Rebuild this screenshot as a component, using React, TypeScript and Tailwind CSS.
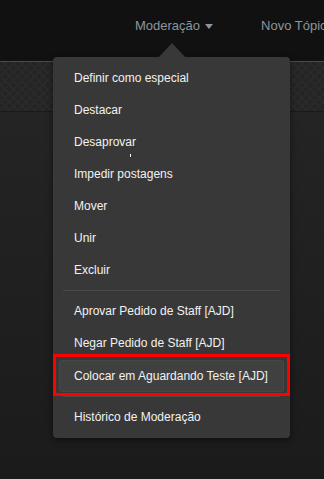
import { Fragment } from "react";

// itens do menu de moderação, agrupados por separador
const GROUPS: string[][] = [
  ["Definir como especial", "Destacar", "Desaprovar", "Impedir postagens", "Mover", "Unir", "Excluir"],
  ["Aprovar Pedido de Staff [AJD]", "Negar Pedido de Staff [AJD]", "Colocar em Aguardando Teste [AJD]"],
  ["Histórico de Moderação"],
];

const HIGHLIGHT = "Colocar em Aguardando Teste [AJD]";

function Separator() {
  return <div className="mx-[10px] my-[4px] h-px bg-[#4a4a4a]" />;
}

function MenuItem({ label }: { label: string }) {
  if (label === HIGHLIGHT) {
    return (
      <div className="mx-[6px] mt-px flex h-8 items-center rounded-[3px] border border-[#474747] bg-[#404040] pl-[14px]">
        {label}
      </div>
    );
  }
  return <div className="flex h-8 items-center px-[21px]">{label}</div>;
}

export default function App() {
  return (
    <div className="relative flex h-[479px] w-[324px] flex-col overflow-hidden bg-[#1b1b1b] font-['Liberation_Sans',Arial,sans-serif]">
      {/* barra superior */}
      <div className="flex h-[61px] shrink-0 items-center gap-[48px] whitespace-nowrap bg-[#111111] pb-[9px] pl-[135px] text-[13px] text-[#8b96a0]">
        <span className="flex items-center gap-[5px]">
          Moderação
          <svg width="8" height="5" viewBox="0 0 8 5" className="mt-px">
            <path d="M0 0h8L4 5z" fill="#8b96a0" />
          </svg>
        </span>
        <span>Novo Tópico</span>
      </div>
      <div className="h-px shrink-0 bg-[#4a4a4a]" />
      <div className="h-[49px] shrink-0 bg-[#242424] bg-[image:repeating-linear-gradient(45deg,#292929_0_2px,transparent_2px_6px),repeating-linear-gradient(-45deg,#292929_0_2px,transparent_2px_6px)]" />
      <div className="h-px shrink-0 bg-[#1a1a1a]" />
      <div className="flex-1 bg-gradient-to-b from-[#242424] to-[#1b1b1b]" />

      {/* dropdown */}
      <div className="absolute left-[53px] top-[57px] w-[237px] rounded-[4px] bg-[#383838] py-[5px] text-[12px] text-[#f2f2f2] shadow-[0_2px_6px_rgba(0,0,0,0.5)]">
        <svg width="28" height="15" viewBox="0 0 28 15" className="absolute left-[105px] top-[-14px]">
          <path d="M0 15L14 0l14 15z" fill="#383838" />
        </svg>
        {GROUPS.map((group, i) => (
          <Fragment key={i}>
            {i > 0 && <Separator />}
            {group.map((label) => (
              <MenuItem key={label} label={label} />
            ))}
          </Fragment>
        ))}
        {/* marcação vermelha */}
        <div className="absolute left-0 top-[297px] h-[42px] w-[237px] border-[3px] border-[#ff0000]" />
        <span className="absolute left-[77px] top-[97px] h-[3px] w-px bg-white" />
      </div>
    </div>
  );
}
